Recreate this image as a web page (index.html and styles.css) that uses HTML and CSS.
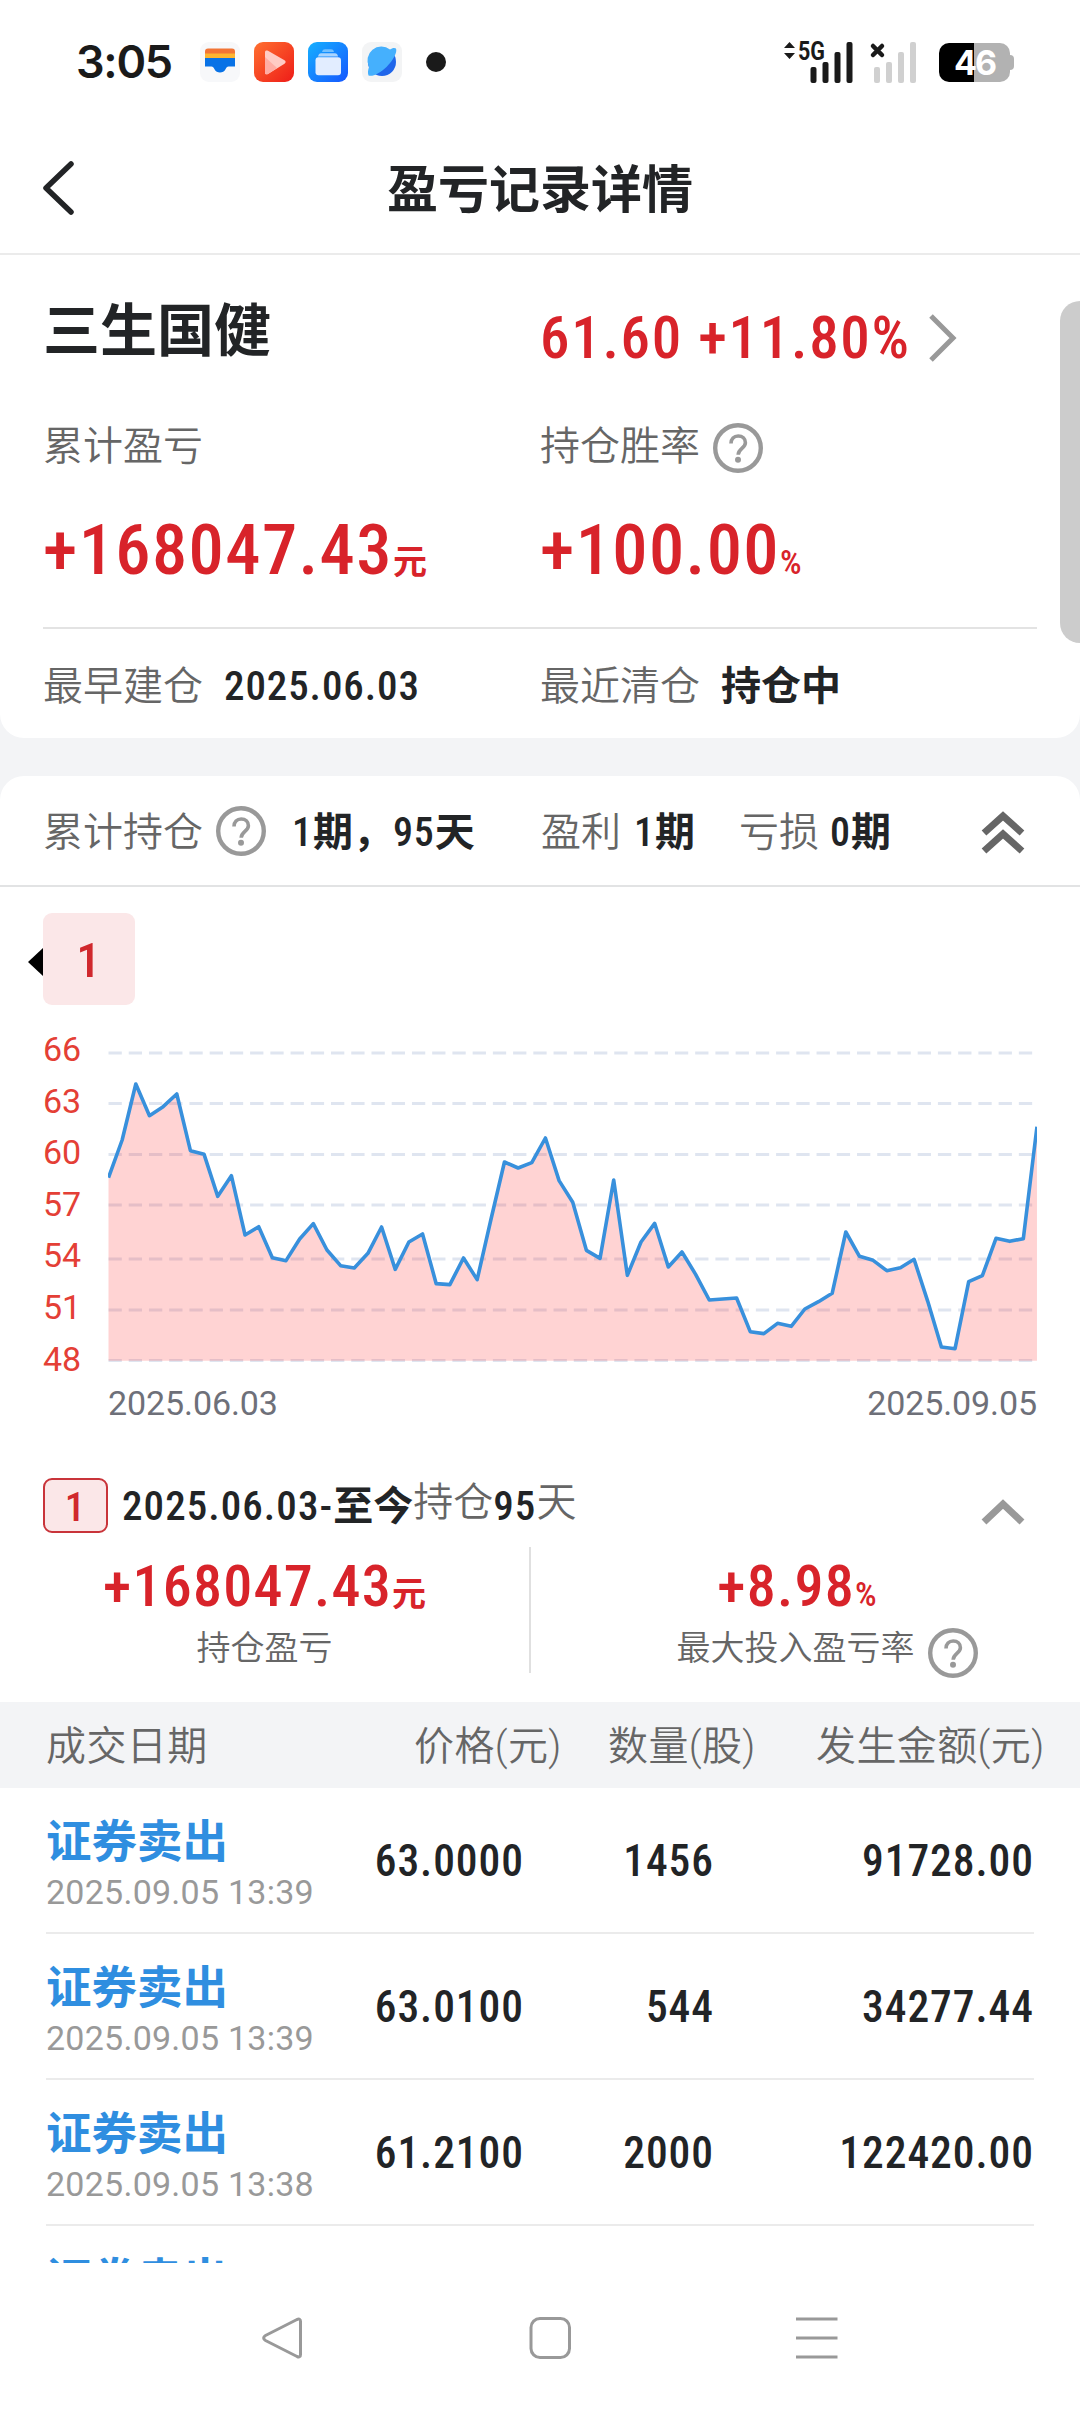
FILE: index.html
```html
<!DOCTYPE html>
<html lang="zh-CN">
<head>
<meta charset="utf-8">
<title>盈亏记录详情</title>
<link rel="stylesheet" href="styles.css">
</head>
<body>
<svg class="defs" width="0" height="0">
  <symbol id="help" viewBox="0 0 50 50">
    <circle cx="25" cy="25" r="22.8" fill="none" stroke="#999" stroke-width="4.4"/>
    <path d="M18 20.5c0-4.700 3-7.500 7.200-7.500s7.200 2.800 7.200 6.700c0 5.300-7.200 6.200-7.200 12" fill="none" stroke="#999" stroke-width="3.600"/>
    <circle cx="25" cy="36.700" r="3" fill="#999"/>
  </symbol>
</svg>

<header class="status">
  <span class="clock">3:05</span>
  <div class="apps">
    <svg width="40" height="40" viewBox="0 0 40 40">
      <rect width="40" height="40" rx="9" fill="#f7f8fa"/>
      <path d="M5 9.500a3 3 0 0 1 3-3h24a3 3 0 0 1 3 3V12H5z" fill="#f27536"/>
      <path d="M5 11.500h30V16H5z" fill="#fcb532"/>
      <path d="M5 16h30v8.500h-6.500c-1.500 0-2 1-3 2.800-2 4.300-9 4.300-11 0-1-1.800-1.500-2.800-3-2.800H5z" fill="#0872e6"/>
    </svg>
    <svg width="40" height="40" viewBox="0 0 40 40">
      <defs><linearGradient id="red" x1="0" y1="0" x2="1" y2="1"><stop offset="0" stop-color="#ff7030"/><stop offset="1" stop-color="#ee1c18"/></linearGradient></defs>
      <rect width="40" height="40" rx="9" fill="url(#red)"/>
      <path d="M11 10c0-1.500 1.500-2 3-1.200l16.500 9.500c1.500.9 1.500 2.500 0 3.400L14 32c-1.500.8-3 .2-3-1.200z" fill="#ffcbc4"/>
      <path d="M11 15l12 11-9 6c-1.500.8-3 .2-3-1.200z" fill="#ffada4"/>
    </svg>
    <svg width="40" height="40" viewBox="0 0 40 40">
      <defs><linearGradient id="blue" x1="0" y1="0" x2="1" y2="1"><stop offset="0" stop-color="#16b0ff"/><stop offset="1" stop-color="#1557ff"/></linearGradient></defs>
      <rect width="40" height="40" rx="9" fill="url(#blue)"/>
      <path d="M14 10c.5-2 1.500-2.700 3-2.700h6c1.500 0 2.500.7 3 2.700z" fill="#73c0ff"/>
      <path d="M10 14.500c.5-2.500 1.500-3.300 3-3.300h14c1.500 0 2.500.8 3 3.300z" fill="#a9d4ff"/>
      <rect x="7.500" y="15.300" width="25.500" height="18" rx="3" fill="#e2edff"/>
    </svg>
    <svg width="40" height="40" viewBox="0 0 40 40">
      <rect width="40" height="40" rx="9" fill="#f3f4f5"/>
      <circle cx="20" cy="20" r="14" fill="#2066ea"/>
      <path d="M34 6.500c-1.500-1-4-.5-6 1A14 14 0 0 0 7 25c-1 3-1.500 6-.5 8.500 4 1.500 12-2.500 18-8.500 7-7 11-15 9.500-18.500z" fill="#45b0fd"/>
    </svg>
  </div>
  <i class="dot"></i>
  <div class="signals">
    <svg width="70" height="42" viewBox="0 0 70 42" fill="#1a1a1a">
      <path d="M1 7 6.500 1 12 7zM1 12h11l-5.500 6z"/>
      <rect x="27.500" y="26" width="6" height="16" rx="2"/><rect x="39.500" y="21" width="6" height="21" rx="2"/><rect x="51.500" y="11" width="6" height="31" rx="2"/><rect x="63.500" y="1" width="6" height="41" rx="2"/>
      <text x="15" y="18.500" class="net" textLength="27" lengthAdjust="spacingAndGlyphs">5G</text>
    </svg>
    <svg width="47" height="42" viewBox="0 0 47 42" fill="#d0d0d0">
      <path d="M3 5l9 9M12 5l-9 9" stroke="#1a1a1a" stroke-width="4.500" stroke-linecap="round"/>
      <rect x="4" y="26" width="6" height="16" rx="2"/><rect x="16" y="21" width="6" height="21" rx="2"/><rect x="28" y="11" width="6" height="31" rx="2"/><rect x="40" y="1" width="6" height="41" rx="2"/>
    </svg>
  </div>
  <div class="battery"><span>46</span></div>
</header>

<nav class="titlebar">
  <svg width="34" height="56" viewBox="0 0 34 56"><path d="M29 4 4 28l25 24" fill="none" stroke="#222426" stroke-width="5.500" stroke-linecap="round" stroke-linejoin="round"/></svg>
  <h1>盈亏记录详情</h1>
</nav>

<main class="content">
  <section class="card summary">
    <div class="cols quote">
      <h2>三生国健</h2>
      <div class="price"><span class="num">61.60 +11.80%</span>
        <svg width="30" height="50" viewBox="0 0 30 50"><path d="M3 3l22 22L3 47" fill="none" stroke="#999" stroke-width="5"/></svg></div>
    </div>
    <div class="cols labels">
      <span class="label">累计盈亏</span>
      <div class="label withhelp">持仓胜率<svg class="help"><use href="#help"/></svg></div>
    </div>
    <div class="cols totals">
      <div class="big"><span class="num">+168047.43</span><b>元</b></div>
      <div class="big"><span class="num">+100.00</span><em>%</em></div>
    </div>
    <div class="cols dates">
      <div><span class="label">最早建仓</span><span class="val num">2025.06.03</span></div>
      <div><span class="label">最近清仓</span><b class="val">持仓中</b></div>
    </div>
  </section>

  <section class="card detail">
    <div class="periods">
      <span class="label p1">累计持仓</span><svg class="help"><use href="#help"/></svg>
      <b class="p2"><span class="num">1</span>期，<span class="num">95</span>天</b>
      <span class="label p3">盈利</span><b class="p4"><span class="num">1</span>期</b>
      <span class="label p5">亏损</span><b class="p6"><span class="num">0</span>期</b>
      <svg class="fold" width="44" height="44" viewBox="0 0 44 44"><path d="M3 22 22 5l19 17M3 40l19-17 19 17" fill="none" stroke="#666" stroke-width="7"/></svg>
    </div>
    <div class="tabs"><i></i><span class="tab num">1</span></div>

    <div class="chart">
      <div class="ylabels"><span>66</span><span>63</span><span>60</span><span>57</span><span>54</span><span>51</span><span>48</span></div>
      <svg width="929" height="345" viewBox="108 0 929 345">
        <path d="M108.500 33H1037M108.500 83.500H1037M108.500 134.500H1037M108.500 185H1037M108.500 239H1037M108.500 290H1037M108.500 340.500H1037" stroke="#dfe5f0" stroke-width="3.200" stroke-dasharray="13.300 6.930"/>
        <g transform="translate(108.500 0) scale(13.654 .33333)">
          <path class="area" d="M0,473 1,360 2,192 3,287 4,260 5,222 6,392 7,403 8,529 9,467 10,645 11,620 12,713 13,722 14,657 15,611 16,690 17,737 18,744 19,700 20,621 21,748 22,666 23,642 24,791 25,794 26,714 27,779 28,600 29,426 30,444 31,428 32,354 33,482 34,547 35,691 36,715 37,480 38,766 39,666 40,610 41,741 42,696 43,763 44,840 45,837 46,834 47,935 48,941 49,910 50,919 51,867 52,845 53,820 54,636 55,709 56,721 57,752 58,743 59,718 60,844 61,981 62,986 63,785 64,767 65,655 66,664 67,656 68,320V1022H0z"/>
          <path class="line" d="M0,473 1,360 2,192 3,287 4,260 5,222 6,392 7,403 8,529 9,467 10,645 11,620 12,713 13,722 14,657 15,611 16,690 17,737 18,744 19,700 20,621 21,748 22,666 23,642 24,791 25,794 26,714 27,779 28,600 29,426 30,444 31,428 32,354 33,482 34,547 35,691 36,715 37,480 38,766 39,666 40,610 41,741 42,696 43,763 44,840 45,837 46,834 47,935 48,941 49,910 50,919 51,867 52,845 53,820 54,636 55,709 56,721 57,752 58,743 59,718 60,844 61,981 62,986 63,785 64,767 65,655 66,664 67,656 68,320"/>
        </g>
      </svg>
    </div>
    <div class="xlabels"><span>2025.06.03</span><span>2025.09.05</span></div>

    <div class="period">
      <span class="badge num">1</span>
      <span class="range"><span class="num">2025.06.03-</span><b>至今</b><span class="raised">持仓</span><span class="num">95</span><span class="raised">天</span></span>
      <svg class="fold" width="44" height="28" viewBox="0 0 44 28"><path d="M3 24 22 6l19 18" fill="none" stroke="#999" stroke-width="7"/></svg>
    </div>
    <div class="stats">
      <div class="stat">
        <div class="mid"><span class="num">+168047.43</span><b>元</b></div>
        <div class="cap">持仓盈亏</div>
      </div>
      <div class="stat second">
        <div class="mid"><span class="num">+8.98</span><em>%</em></div>
        <div class="cap">最大投入盈亏率<svg class="help"><use href="#help"/></svg></div>
      </div>
    </div>

    <div class="thead"><span>成交日期</span><span>价格(元)</span><span>数量(股)</span><span>发生金额(元)</span></div>
    <div class="rows">
      <div class="row"><div><b>证券卖出</b><time>2025.09.05 13:39</time></div><span class="num">63.0000</span><span class="num">1456</span><span class="num">91728.00</span></div>
      <div class="row"><div><b>证券卖出</b><time>2025.09.05 13:39</time></div><span class="num">63.0100</span><span class="num">544</span><span class="num">34277.44</span></div>
      <div class="row"><div><b>证券卖出</b><time>2025.09.05 13:38</time></div><span class="num">61.2100</span><span class="num">2000</span><span class="num">122420.00</span></div>
      <div class="row"><div><b>证券卖出</b></div></div>
    </div>
  </section>
</main>

<footer class="navbar">
  <svg width="42" height="44" viewBox="0 0 42 44"><path d="M36 3.500 4.500 19.500c-2.500 1.500-2.500 3.500 0 5L36 40.500c2.500 1 3.500 0 3.500-2v-33c0-2-1-3-3.500-2z"/></svg>
  <svg width="42" height="44" viewBox="0 0 42 44"><rect x="2" y="2.500" width="38.500" height="39" rx="9"/></svg>
  <svg width="42" height="44" viewBox="0 0 42 44"><path d="M0 3h41.500M0 22h41.500M0 41h41.500"/></svg>
</footer>
<i class="scrollbar"></i>
</body>
</html>
```

FILE: styles.css
```css
* { box-sizing: border-box; margin: 0; padding: 0; }
body {
  position: relative;
  width: 1080px;
  height: 2412px;
  overflow: hidden;
  background: #fff;
  color: #222426;
  font-family: Roboto, "Noto Sans CJK SC", sans-serif;
  font-size: 40px;
  line-height: 1;
}
svg { display: block; flex: none; }
.defs { position: absolute; }
em { font-style: normal; }
.num { font-weight: 500; font-stretch: 75%; letter-spacing: 0.022em; white-space: nowrap; }
.label { color: #666; font-weight: 350; white-space: nowrap; }
.help { width: 50px; height: 50px; }

/* status bar */
.status { display: flex; align-items: center; height: 124px; padding-left: 76px; }
.clock { width: 124px; font: 600 45px/50px Inter, sans-serif; letter-spacing: -1.300px; color: #1a1a1a; }
.apps { display: flex; gap: 14px; }
.dot { width: 20px; height: 20px; margin-left: 24px; border-radius: 50%; background: #1a1a1a; }
.signals { display: flex; gap: 17px; margin-left: 337px; }
.signals svg { overflow: visible; }
.net { font: 700 25px Roboto, sans-serif; }
.battery {
  position: relative;
  width: 71px;
  height: 39px;
  margin-left: 22px;
  border-radius: 10px;
  background: linear-gradient(90deg, #000 35px, #b2b2b2 35px);
  text-align: center;
  font: 700 34px/40px Inter, sans-serif;
  letter-spacing: -2px;
  color: #fff;
}
.battery::after { content: ""; position: absolute; left: 71px; top: 12px; width: 4px; height: 15px; border-radius: 0 4px 4px 0; background: #b2b2b2; }

/* title bar */
.titlebar { display: flex; align-items: center; height: 131px; padding-left: 42px; border-bottom: 2px solid #ebebeb; }
.titlebar svg { margin-top: -2px; }
.titlebar h1 { flex: 1; margin: 5px 76px 0 0; text-align: center; font-size: 51px; font-weight: 600; line-height: 60px; }

.content { height: 2008px; overflow: hidden; background: #f3f4f6; }
.card { background: #fff; }
.cols { display: grid; grid-template-columns: 497px 1fr; align-items: center; }

/* summary card */
.summary { height: 483px; padding: 38px 43px 0; border-radius: 0 0 24px 24px; }
.quote { height: 84px; }
.quote h2 { font-size: 57px; line-height: 60px; padding-bottom: 6px; }
.price { display: flex; align-items: center; color: #d8232a; font-size: 59px; line-height: 60px; padding-top: 6px; }
.price .num { width: 370px; letter-spacing: 0.029em; }
.price svg { margin-left: 18px; }
.labels { height: 62px; margin-top: 40px; line-height: 50px; }
.labels .label { margin-top: -3px; }
.withhelp { display: flex; align-items: center; }
.withhelp .help { margin: 3px 0 0 13px; }
.totals { height: 148px; padding-top: 6px; }
.big { display: flex; align-items: baseline; color: #d8232a; line-height: 90px; font-size: 70.500px; }
.big .num { letter-spacing: 0.02em; }
.big b, .big em, .mid b, .mid em { font-size: 34px; }
.big em, .mid em { font-weight: 500; font-stretch: 75%; }
.dates { height: 111px; border-top: 2px solid #e3e3e3; line-height: 60px; }
.dates > div { display: flex; align-items: baseline; padding-top: 6px; }
.val { margin-left: 21px; font-size: 40px; }
.val.num { font-size: 41px; }

/* holding periods */
.detail { margin-top: 38px; height: 1487px; border-radius: 24px 24px 0 0; }
.periods { display: flex; align-items: center; height: 111px; padding: 5px 55px 0 43px; border-bottom: 2px solid #e2e3e4; line-height: 50px; white-space: nowrap; }
.periods .help { margin: -5px 0 0 13px; }
.p2 { width: 249px; margin-left: 26px; }
.p3 { width: 93px; }
.p4 { width: 105px; }
.p5 { width: 91px; }
.fold { margin-left: auto; }
.tabs { display: flex; align-items: center; padding: 26px 0 0 28px; }
.tabs i { margin-top: 6px; border: 14px solid transparent; border-left: 0; border-right: 15px solid #000; }
.tab { width: 92px; height: 92px; border-radius: 9px; background: #fbe7e8; color: #d0282d; text-align: center; font-size: 49px; line-height: 96px; }

/* price chart */
.chart { display: flex; height: 360px; padding: 15px 43px 0; }
.ylabels { width: 65px; padding-top: 3px; font-size: 34px; color: #e43f36; }
.ylabels span { display: block; height: 51.600px; line-height: 52px; }
.area { fill: rgba(255, 32, 32, .195); }
.line { fill: none; stroke: #3890dc; stroke-width: 3.600px; vector-effect: non-scaling-stroke; stroke-linejoin: round; }
.xlabels { display: flex; justify-content: space-between; padding: 16px 43px 0 108px; font-size: 34px; line-height: 44px; letter-spacing: -0.100px; color: #6e7079; }

/* one holding period */
.period { display: flex; align-items: center; height: 54px; margin-top: 53px; padding: 0 55px 0 43px; }
.badge { width: 65px; height: 55px; border: 2px solid #c9343a; border-radius: 9px; background: #fbe7e8; color: #d0282d; font-size: 41px; line-height: 54px; text-align: center; }
.range { margin: 2px 0 0 14px; line-height: 50px; font-size: 40px; white-space: nowrap; }
.range .num { font-size: 41px; letter-spacing: 0.026em; }
.raised { position: relative; top: -4px; color: #666; font-weight: 350; }
.period .fold { margin-top: 13px; }
.stats { display: flex; height: 170px; padding-top: 15px; }
.stat { width: 531px; height: 126px; border-right: 2px solid #e0e0e0; }
.second { width: 549px; border: 0; }
.mid { display: flex; align-items: baseline; justify-content: center; height: 74px; font-size: 58px; line-height: 78px; color: #d8232a; }
.second .mid { padding-right: 17px; }
.cap { display: flex; justify-content: center; color: #666; font-size: 34px; font-weight: 350; line-height: 54px; }
.second .cap { padding-left: 42px; }
.cap .help { margin: 7px -1px 0 13px; }

/* trades table */
.thead { display: grid; grid-template-columns: 368px 194px 208px 1fr; height: 86px; padding: 0 35px 0 46px; background: #f3f4f6; color: #666; font-weight: 350; line-height: 90px; letter-spacing: 0.400px; white-space: nowrap; }
.rows { padding: 0 46px; }
.row { display: grid; grid-template-columns: 301px 177px 190px 1fr; height: 146px; border-bottom: 2px solid #ebebeb; font-size: 43.500px; line-height: 148px; text-align: right; }
.row div { padding-top: 29px; text-align: left; }
.row b { display: block; font-size: 45.500px; font-weight: 600; line-height: 52px; color: #2f8ee0; }
.row time { display: block; font-size: 34px; line-height: 46px; font-weight: 400; letter-spacing: 0.250px; color: #999; white-space: nowrap; }

/* system navigation */
.navbar { display: flex; align-items: center; justify-content: space-between; height: 149px; padding: 0 242px 0 261px; }
.navbar svg { fill: none; stroke: #999; stroke-width: 3; }
.scrollbar { position: absolute; right: 0; top: 301px; width: 20px; height: 342px; border-radius: 20px 0 0 20px; background: #ccc; }
```
